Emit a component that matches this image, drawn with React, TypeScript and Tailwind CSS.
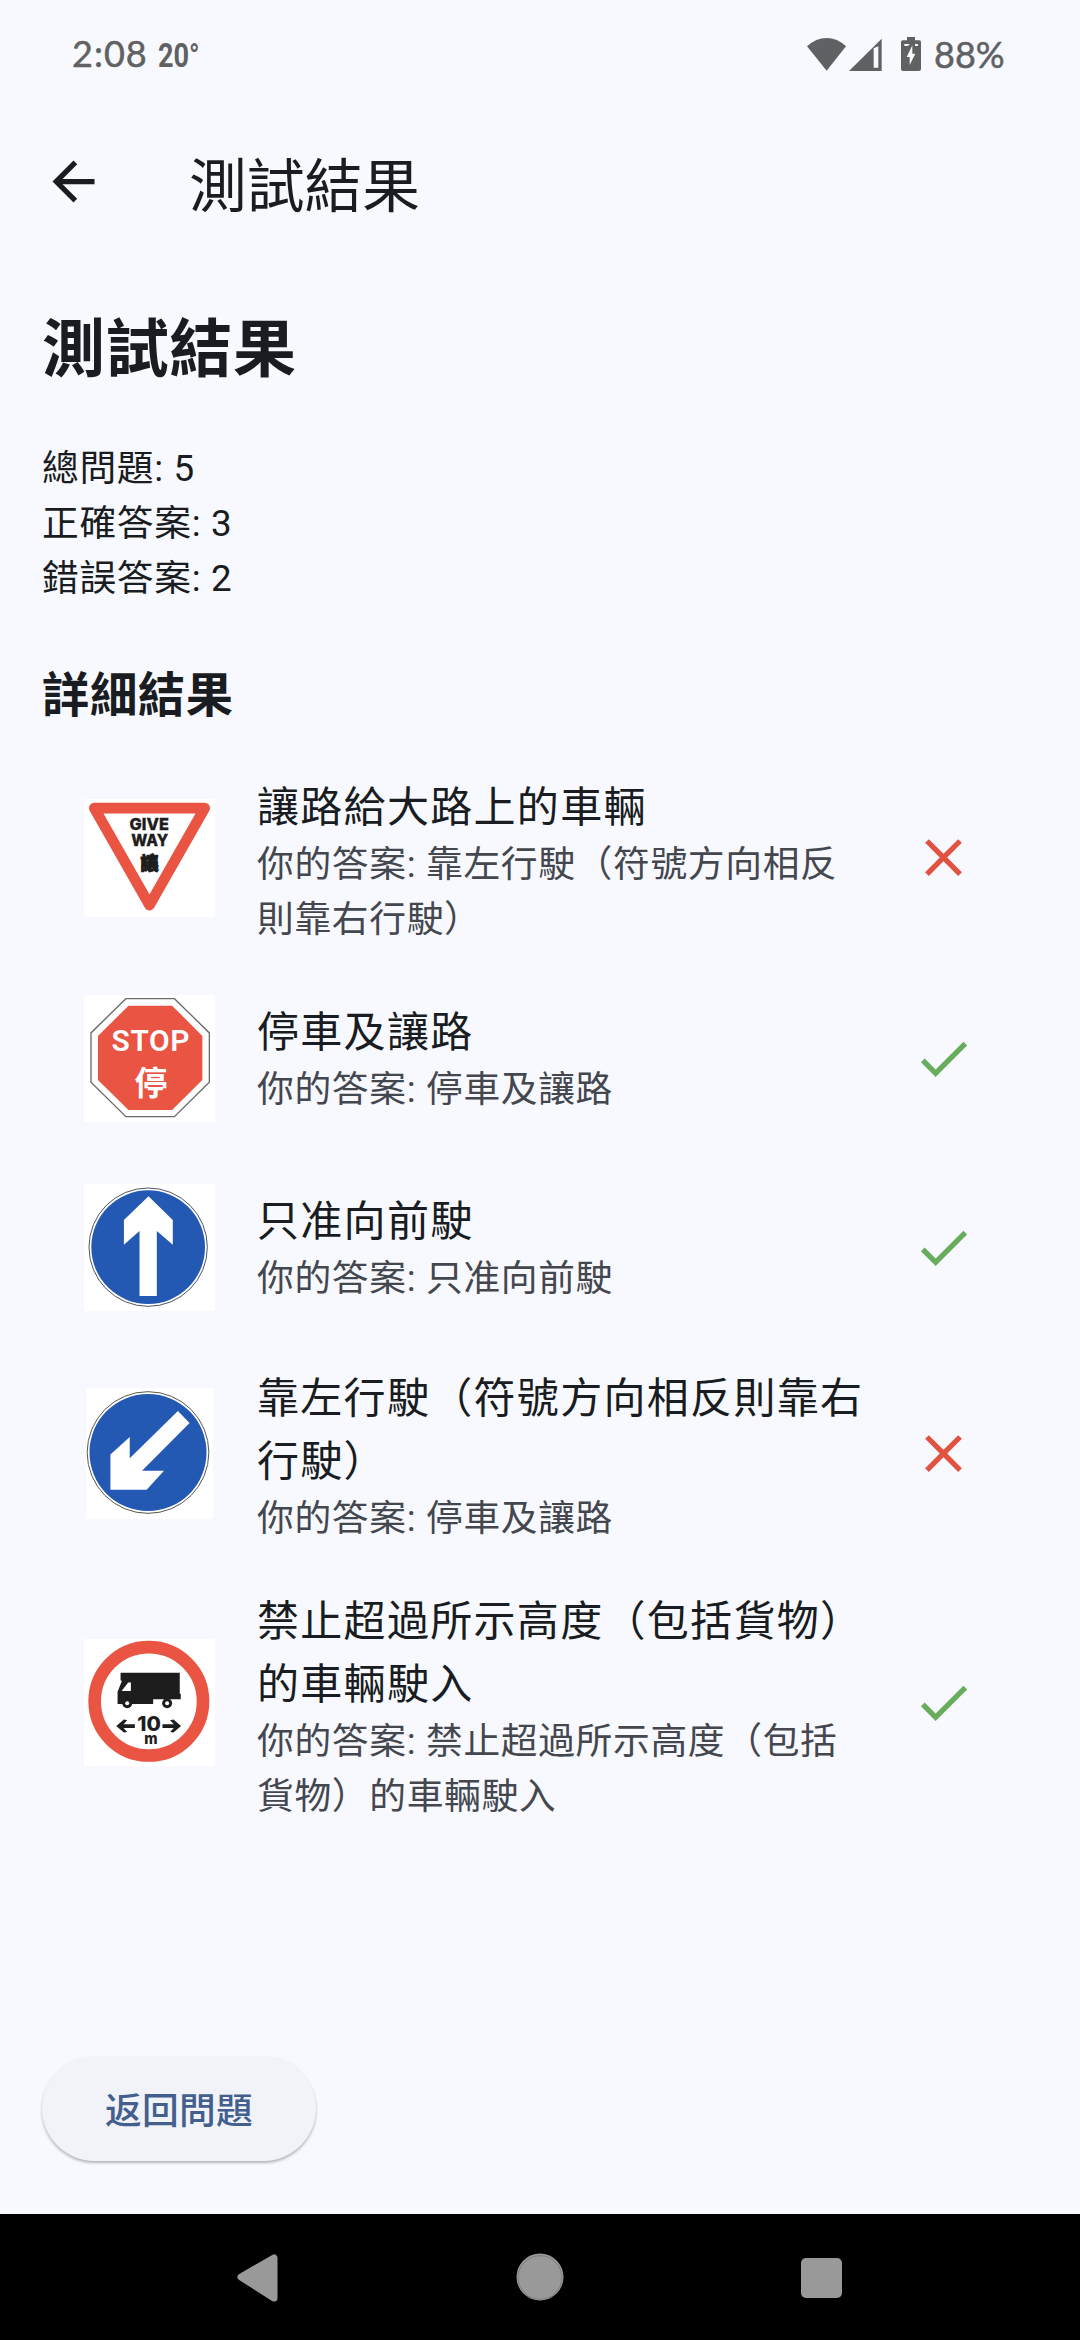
import React from 'react';

type SignType = 'giveWay' | 'stop' | 'ahead' | 'keepLeft' | 'maxWidth';

interface Result {
  sign: SignType;
  title: string;
  answer: string;
  correct: boolean;
  rowClass: string;
  textClass: string;
}

const results: Result[] = [
  { sign: 'giveWay', title: '讓路給大路上的車輛', answer: '靠左行駛（符號方向相反則靠右行駛）', correct: false, rowClass: 'h-[213px]', textClass: 'pt-[8px]' },
  { sign: 'stop', title: '停車及讓路', answer: '停車及讓路', correct: true, rowClass: 'h-[189px]', textClass: 'pt-0' },
  { sign: 'ahead', title: '只准向前駛', answer: '只准向前駛', correct: true, rowClass: 'h-[189px]', textClass: 'pt-0' },
  { sign: 'keepLeft', title: '靠左行駛（符號方向相反則靠右行駛）', answer: '停車及讓路', correct: false, rowClass: 'h-[223px]', textClass: 'pt-[6px]' },
  { sign: 'maxWidth', title: '禁止超過所示高度（包括貨物）的車輛駛入', answer: '禁止超過所示高度（包括貨物）的車輛駛入', correct: true, rowClass: 'h-[275px]', textClass: 'pt-[9px]' },
];

function GiveWaySign() {
  return (
    <svg viewBox="0 0 394 354" className="w-[131px] h-[118px] bg-white">
      <path d="M31 27H363L197 319Z" fill="#fff" stroke="#e95443" strokeWidth="32" strokeLinejoin="round" />
      <g fill="#1d1d1d" stroke="#1d1d1d" strokeWidth="1" fontFamily="Inter, sans-serif" fontWeight="800" fontSize="48">
        <text x="137" y="93" textLength="118" lengthAdjust="spacingAndGlyphs">GIVE</text>
        <text x="142" y="142" textLength="111" lengthAdjust="spacingAndGlyphs">WAY</text>
        <text x="170" y="213" fontSize="54" strokeWidth="3" fontFamily="'Noto Sans CJK SC', sans-serif">讓</text>
      </g>
    </svg>
  );
}

function StopSign() {
  return (
    <svg viewBox="0 0 394 382" className="w-[131px] h-[127px] bg-white">
      <path d="M126 11H272L377 114V262L272 366H126L21 262V114Z" fill="#fff" stroke="#6b6b6b" strokeWidth="4" />
      <path d="M134 32H265L356 123V256L265 346H134L42 256V123Z" fill="#e95443" />
      <g fill="#fff">
        <text x="83" y="167" fontSize="90" fontWeight="600" fontFamily="Roboto, sans-serif" textLength="234" lengthAdjust="spacing">STOP</text>
        <text x="152" y="300" fontSize="99" fontWeight="700" fontFamily="'Noto Sans CJK SC', sans-serif">停</text>
      </g>
    </svg>
  );
}

function AheadSign() {
  return (
    <svg viewBox="0 0 394 382" className="w-[131px] h-[127px] bg-white">
      <circle cx="193" cy="190" r="178" fill="#fff" stroke="#4b5563" strokeWidth="3" />
      <circle cx="193" cy="190" r="171" fill="#2459b3" />
      <path d="M194 37L267 108V183L219 141V337H167V141L120 183V108Z" fill="#fff" />
    </svg>
  );
}

function KeepLeftSign() {
  return (
    <svg viewBox="0 0 381 394" className="w-[127px] h-[131px] bg-white">
      <circle cx="186" cy="194" r="183" fill="#fff" stroke="#55554f" strokeWidth="3" />
      <circle cx="186" cy="194" r="176" fill="#2459b3" />
      <path d="M276 69L311 105L168 249H234L182 306H73V200L131 147V211Z" fill="#fff" />
    </svg>
  );
}

function MaxWidthSign() {
  return (
    <svg viewBox="0 0 394 381" className="w-[131px] h-[127px] bg-white">
      <circle cx="195" cy="187" r="163" fill="#fff" stroke="#e95443" strokeWidth="38" />
      <g fill="#1d1d1d">
        <path d="M110 101H288V164H291V181H208V195H101V158L113 128V124H110Z" />
        <circle cx="130" cy="193" r="15" />
        <circle cx="250" cy="193" r="15" />
        <path d="M97 261L120 242L130 244L119 256H153V267H119L130 279L120 281Z" />
        <path d="M292 261L269 242L259 244L270 256H236V267H270L259 279L269 281Z" />
        <g fontFamily="Inter, sans-serif" fontWeight="800">
          <text x="160" y="277" fontSize="62" textLength="71" lengthAdjust="spacingAndGlyphs">10</text>
          <text x="181" y="316" fontSize="46" textLength="40" lengthAdjust="spacingAndGlyphs">m</text>
        </g>
      </g>
      <path d="M113 156L133 130H141V156Z" fill="#fff" />
      <circle cx="130" cy="193" r="6" fill="#fff" />
      <circle cx="250" cy="193" r="6" fill="#fff" />
    </svg>
  );
}

const signs: Record<SignType, () => React.JSX.Element> = {
  giveWay: GiveWaySign,
  stop: StopSign,
  ahead: AheadSign,
  keepLeft: KeepLeftSign,
  maxWidth: MaxWidthSign,
};

function StatusBar() {
  return (
    <div className="h-[106px] pt-px pl-[72px] pr-[76px] flex items-center justify-between text-[#5f6163] font-['Lato',sans-serif]">
      <div className="flex items-baseline">
        <span className="w-[86px] text-[36px] leading-none tracking-[1px] [-webkit-text-stroke:0.5px]">2:08</span>
        <span className="inline-block origin-left scale-x-[0.82] text-[33px] leading-none font-bold font-['Roboto',sans-serif]">20°</span>
      </div>
      <div className="flex items-center">
        <svg viewBox="141 105 345 108" className="w-[115px] h-[36px]" fill="currentColor">
          <path d="M141 136Q168 111 200 111T258 136L200 209Z" />
          <path fillRule="evenodd" d="M267 210L365 113V210ZM341 142V200H355V136Z" />
          <path fillRule="evenodd" d="M441 108H465V118H478Q483 118 483 123V204Q483 210 477 210H429Q423 210 423 204V123Q423 118 428 118H441ZM433 129V135H443L450 129ZM465 129V135H474V129ZM457 133L440 168H449V192L466 158H457Z" />
        </svg>
        <span className="ml-[12px] w-[70px] text-[36px] leading-none [-webkit-text-stroke:0.5px]">88%</span>
      </div>
    </div>
  );
}

function ResultRow({ result }: { result: Result }) {
  const Sign = signs[result.sign];
  return (
    <li className={`${result.rowClass} flex items-center px-[42px]`}>
      <div className="w-[131px] flex justify-center shrink-0">
        <Sign />
      </div>
      <div className={`${result.textClass} ml-[42px] w-[614px] shrink-0`}>
        <p className="text-[42px] leading-[63px] tracking-[1.31px] text-[#191c20]">{result.title}</p>
        <p className="-mt-[2px] text-[36.75px] leading-[55px] tracking-[0.66px] text-[#44474e]">{`你的答案: ${result.answer}`}</p>
      </div>
      <svg viewBox="0 0 24 24" className="ml-[41px] w-[63px] h-[63px] shrink-0">
        {result.correct ? (
          <path fill="#67ad5b" d="M9 16.17 4.83 12l-1.42 1.41L9 19 21 7l-1.41-1.41z" />
        ) : (
          <path fill="#e15241" d="M19 6.41 17.59 5 12 10.59 6.41 5 5 6.41 10.59 12 5 17.59 6.41 19 12 13.41 17.59 19 19 17.59 13.41 12z" />
        )}
      </svg>
    </li>
  );
}

export default function App() {
  return (
    <div
      lang="zh-CN"
      className="w-[1080px] h-[2340px] flex flex-col overflow-hidden bg-[#f8f9ff] text-[#191c20] font-['Roboto','Noto_Sans_CJK_SC',sans-serif]"
    >
      <StatusBar />

      <header className="h-[150px] pl-[42px] flex items-center">
        <svg viewBox="0 0 24 24" className="w-[63px] h-[63px]" fill="currentColor">
          <path d="M20 11H7.83l5.59-5.59L12 4l-8 8 8 8 1.41-1.41L7.83 13H20v-2z" />
        </svg>
        <h1 className="ml-[84px] pt-[12px] text-[57.75px] leading-[74px]">測試結果</h1>
      </header>

      <main className="flex-1 px-[42px] flex flex-col">
        <h2 className="mt-[48px] text-[63px] leading-[92px] tracking-[0.66px] font-bold">測試結果</h2>
        <div className="mt-[45px] text-[36.75px] leading-[55px] tracking-[0.66px]">
          <p>總問題: 5</p>
          <p>正確答案: 3</p>
          <p>錯誤答案: 2</p>
        </div>
        <h3 className="mt-[55px] text-[47.25px] leading-[70px] tracking-[0.66px] font-bold">詳細結果</h3>
        <ul className="mt-[20px]">
          {results.map(result => (
            <ResultRow key={result.title} result={result} />
          ))}
        </ul>
        <button className="mt-auto mb-[53px] w-[274px] h-[105px] pt-[7px] shrink-0 rounded-full bg-[#f2f3f8] text-[#435f8e] text-[36.75px] tracking-[0.26px] font-medium shadow-[0_2px_3px_rgba(0,0,0,0.28)]">
          返回問題
        </button>
      </main>

      <nav className="h-[126px] shrink-0 bg-black">
        <svg viewBox="0 0 1080 126" className="w-full h-full" fill="#999">
          <path d="M241 63L274 44V84Z" stroke="#999" strokeWidth="7" strokeLinejoin="round" />
          <circle cx="540" cy="63" r="23.5" />
          <circle cx="540" cy="63.5" r="21.8" fill="none" stroke="#777" strokeWidth="0.8" />
          <rect x="801" y="44" width="41" height="40" rx="5" />
        </svg>
      </nav>
    </div>
  );
}
